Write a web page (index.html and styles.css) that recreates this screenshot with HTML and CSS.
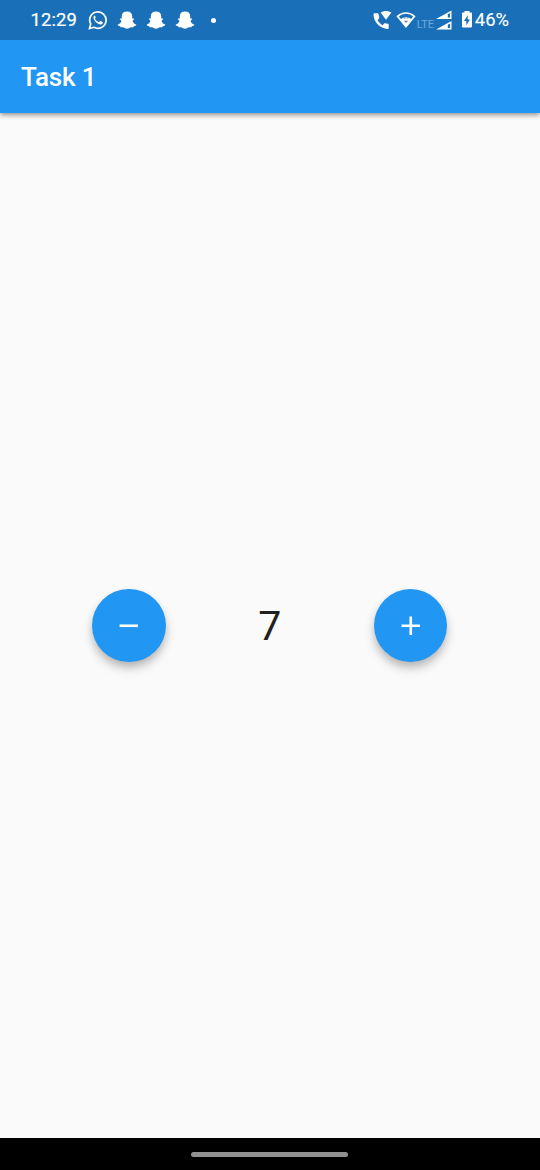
FILE: index.html
```html
<!DOCTYPE html>
<html lang="en">
<head>
<meta charset="utf-8">
<title>Task 1</title>
<link rel="stylesheet" href="styles.css">
</head>
<body>
<svg class="defs" aria-hidden="true">
  <symbol id="ghost" viewBox="0 0 20 20">
    <path d="M10 1.600C6.600 1.600 4.800 3.600 4.800 6v2.600C4.200 8.500 3 8.100 2.900 9c0 .9 1.600 1.100 1.500 1.900C3.900 12.600 2.700 14 .8 14.600c-.5.8.8 1.400 2.400 1.600.3.500.2 1 .8 1.100.8.100 1.700-.3 2.700.2.900.4 1.800 1.200 3.300 1.200s2.400-.8 3.300-1.200c1-.5 1.900-.1 2.700-.2.6-.1.500-.6.8-1.100 1.600-.2 2.900-.8 2.400-1.600-1.900-.6-3.100-2-3.600-3.700-.1-.8 1.500-1 1.500-1.900-.1-.9-1.300-.5-1.900-.4V6c0-2.400-1.800-4.400-5.200-4.400z"/>
  </symbol>
</svg>
<div class="screen">
  <header class="status">
    <span class="clock">12:29</span>
    <svg class="whatsapp" viewBox="0 0 20 20">
      <path class="ring" d="M1.500 18.500l1.200-4.500A8.200 8.200 0 1 1 6 17.300z"/>
      <path d="M6.900 5.300c-.9.500-1.500 1.400-1.400 2.500.4 3.200 3.300 6 6.700 6.700 1.200.1 2.300-.5 2.600-1.500.1-.7 0-.9-.3-1.100l-1.900-.9c-.4-.1-.6 0-.9.400l-.7.800c-2-.7-3.200-1.900-4.100-3.600l.7-1c.1-.3.1-.5 0-.7l-.8-1.700z"/>
    </svg>
    <svg class="ghost"><use href="#ghost"/></svg>
    <svg class="ghost"><use href="#ghost"/></svg>
    <svg class="ghost"><use href="#ghost"/></svg>
    <span class="more"></span>
    <svg class="call" viewBox="0 0 19 20">
      <path d="M4.200 3.200 1.400 3.300C.6 3.400.5 4 .5 4.500.8 12.500 7 18.300 14.700 18.900c.6 0 1-.4 1-1v-3.200c0-.6-.4-.9-.9-1l-2.600-.5c-.5-.1-.8.1-1.100.4l-1.500 1.600C7.600 14.200 5.600 12.300 4.500 10.100L6 8.500c.3-.3.4-.6.300-1l-.7-3.300c-.1-.6-.5-1-1.400-1z"/>
      <path d="M7.600 2.600C10.500.5 15.400.5 18.400 2.600L13 9.800z"/>
    </svg>
    <svg class="wifi" viewBox="0 0 20 18">
      <path class="fan" d="M1.600 5.300C6.300.9 13.700.9 18.400 5.300L10 15.600z"/>
      <path d="M4.500 8.300C7.600 5.600 12.400 5.600 15.500 8.300L10 15.600z"/>
      <path class="arrows" d="M7.500 7.500 8.600 6.200 9.700 7.500zM10.300 7.500l1.100-1.300 1.100 1.300zM7.800 9.800h4.400L10 12z"/>
    </svg>
    <span class="lte">LTE</span>
    <svg class="signal" viewBox="0 0 16 20">
      <path d="M0 9 15.500.4V9zM11.800 4.200v3.400h2.300V2.900zM0 19.500 15.500 10.900v8.600zM11.800 14.700v3.400h2.300v-4.700z" fill-rule="evenodd"/>
    </svg>
    <svg class="battery" viewBox="0 0 10 17">
      <path d="M2.500 0h5v1.500H9q1 0 1 1v13q0 1-1 1H1q-1 0-1-1v-13q0-1 1-1h1.500zM5.700 4.300 2 9.900h2.300V14.300L8 8.600H5.700z" fill-rule="evenodd"/>
    </svg>
    <span class="percent">46%</span>
  </header>
  <div class="appbar"><h1 class="title">Task 1</h1></div>
  <main class="counter">
    <button class="fab" aria-label="Decrement"><svg class="sign" viewBox="0 0 24 24"><path d="M19 13H5v-2h14z"/></svg></button>
    <span class="value">7</span>
    <button class="fab" aria-label="Increment"><svg class="sign" viewBox="0 0 24 24"><path d="M19 13h-6v6h-2v-6H5v-2h6V5h2v6h6z"/></svg></button>
  </main>
  <footer class="nav"><span class="handle"></span></footer>
</div>
</body>
</html>
```
FILE: styles.css
```css
body { margin: 0; font-family: Roboto, sans-serif; }
svg { display: block; fill: #fff; flex: none; }
.defs { display: none; }
.screen { width: 540px; height: 1170px; display: flex; flex-direction: column; background: #fafafa; overflow: hidden; }
.status { position: relative; z-index: 1; height: 40px; flex: none; box-sizing: border-box; padding: 0 31px 0 30.5px; display: flex; align-items: center; background: #1a70b8; color: #fff; font-size: 18.4px; line-height: 40px; }
.clock { width: 57.5px; flex: none; -webkit-text-stroke: 0.2px #fff; letter-spacing: 0.15px; }
.whatsapp { width: 20px; height: 20px; margin-right: 9px; }
.whatsapp .ring { fill: none; stroke: #fff; stroke-width: 1.7; }
.ghost { width: 20px; height: 20px; margin-right: 9px; }
.more { width: 5px; height: 5px; margin-left: 7px; border-radius: 50%; background: #fff; }
.call { width: 19px; height: 20px; margin-left: auto; }
.wifi { width: 20px; height: 18px; margin-left: 4px; }
.wifi .fan { fill: none; stroke: #fff; stroke-width: 1.7; }
.wifi .arrows { fill: #6f8798; }
.lte { width: 19px; flex: none; margin-left: 1px; font-size: 11px; line-height: 12px; padding-top: 10px; color: #6ba3d5; -webkit-text-stroke: 0.2px #6ba3d5; }
.signal { width: 16px; height: 20px; }
.battery { width: 10px; height: 17px; margin: 0 0 1px 10px; }
.percent { margin-left: 3px; -webkit-text-stroke: 0.1px #fff; }
.appbar { height: 73px; flex: none; box-sizing: border-box; padding: 0 21px; display: flex; align-items: center; background: #2196f3; box-shadow: 0 2px 5px rgba(0, 0, 0, .42); }
.title { margin: 0; font-size: 26px; font-weight: 500; line-height: 32px; letter-spacing: -0.15px; color: #fff; }
.counter { flex: 1; padding-right: 0.5px; display: flex; align-items: center; justify-content: space-evenly; }
.value { font-size: 41px; line-height: 50px; padding-top: 1px; color: #212121; }
.fab { width: 73.5px; height: 73.5px; padding: 0; border: 0; border-radius: 50%; display: flex; align-items: center; justify-content: center; background: #2196f3; box-shadow: 0 5px 8px -1px rgba(0, 0, 0, .2), 0 7px 12px rgba(0, 0, 0, .12); }
.sign { width: 31.5px; height: 31.5px; }
.nav { height: 32px; flex: none; box-sizing: border-box; padding-right: 1px; display: flex; align-items: center; justify-content: center; background: #000; }
.handle { width: 157px; height: 5px; border-radius: 3px; background: #919191; }
```
